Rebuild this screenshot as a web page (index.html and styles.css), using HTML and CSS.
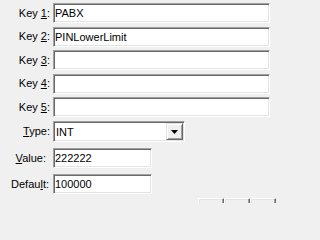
FILE: index.html
```html
<!DOCTYPE html>
<html>
<head>
<meta charset="utf-8">
<link rel="stylesheet" href="styles.css">
</head>
<body>
<div class="dialog">
  <div class="keys">
    <div class="row"><label class="lbl">Key <u>1</u>:</label><input class="edit wide" value="PABX"></div>
    <div class="row"><label class="lbl">Key <u>2</u>:</label><input class="edit wide" value="PINLowerLimit"></div>
    <div class="row"><label class="lbl">Key <u>3</u>:</label><input class="edit wide" value=""></div>
    <div class="row"><label class="lbl">Key <u>4</u>:</label><input class="edit wide" value=""></div>
    <div class="row"><label class="lbl">Key <u>5</u>:</label><input class="edit wide" value=""></div>
  </div>
  <div class="row row-type"><label class="lbl"><u>T</u>ype:</label>
    <div class="combo"><span class="combo-text">INT</span><span class="combo-btn"><svg width="7" height="4" viewBox="0 0 7 4"><path d="M0 0H7L3.5 4Z" fill="#000"/></svg></span></div>
  </div>
  <div class="row row-value"><label class="lbl lbl-value"><u>V</u>alue:</label><input class="edit short" value="222222"></div>
  <div class="row row-default"><label class="lbl lbl-default">Defau<u>l</u>t:</label><input class="edit short" value="100000"></div>
  <div class="buttons"><span class="btn"></span><span class="btn"></span><span class="btn"></span></div>
</div>
</body>
</html>
```
FILE: styles.css
```css
html, body {
  margin: 0;
  padding: 0;
  overflow: hidden;
  background: #f0f0f0;
}
body {
  font-family: "Liberation Sans", Arial, sans-serif;
  font-size: 11px;
  color: #000;
}
.dialog {
  width: 277px;
  height: 203px;
  overflow: hidden;
  display: flex;
  flex-direction: column;
  padding-top: 3px;
  box-sizing: border-box;
}
.keys {
  display: flex;
  flex-direction: column;
  gap: 3.5px;
  margin-bottom: 4px;
}
.row {
  display: flex;
  align-items: center;
  gap: 3px;
  flex: none;
}
.row-type { margin-bottom: 6px; }
.row-value { margin-bottom: 6px; }
.row-default { margin-bottom: 4px; }
.lbl {
  width: 50px;
  flex: none;
  text-align: right;
  box-sizing: border-box;
  line-height: 13px;
  white-space: nowrap;
}
.lbl-value { padding-right: 4px; }
.lbl-default { padding-right: 1px; }
.edit {
  box-sizing: border-box;
  height: 20px;
  margin: 0;
  padding: 0 0 0 1px;
  font: inherit;
  color: #000;
  background: #fff;
  border: 1px solid;
  border-color: #a0a0a0 #ffffff #ffffff #a0a0a0;
  box-shadow: inset 1px 1px 0 #696969, inset -1px -1px 0 #e3e3e3;
  outline: none;
  border-radius: 0;
}
.wide { width: 217px; }
.short { width: 99px; }
.combo {
  box-sizing: border-box;
  width: 132px;
  height: 21px;
  display: flex;
  align-items: center;
  background: #fff;
  border: 1px solid;
  border-color: #a0a0a0 #ffffff #ffffff #a0a0a0;
  box-shadow: inset 1px 1px 0 #696969, inset -1px -1px 0 #e3e3e3;
  padding: 1px;
}
.combo-text {
  flex: 1;
  padding-left: 1px;
}
.combo-btn {
  box-sizing: border-box;
  width: 17px;
  height: 17px;
  display: flex;
  align-items: center;
  justify-content: center;
  background: #f0f0f0;
  border: 1px solid;
  border-color: #e3e3e3 #696969 #696969 #e3e3e3;
  box-shadow: inset 1px 1px 0 #ffffff, inset -1px -1px 0 #a0a0a0;
}
.combo-btn svg { display: block; }
.buttons {
  display: flex;
  justify-content: flex-end;
  padding-right: 1px;
  flex: none;
}
.btn {
  box-sizing: border-box;
  width: 26px;
  height: 22px;
  flex: none;
  background: #f0f0f0;
  border: 1px solid;
  border-color: #ffffff #696969 #696969 #ffffff;
  box-shadow: inset -1px -1px 0 #a0a0a0, inset 1px 1px 0 #e3e3e3;
}
```
